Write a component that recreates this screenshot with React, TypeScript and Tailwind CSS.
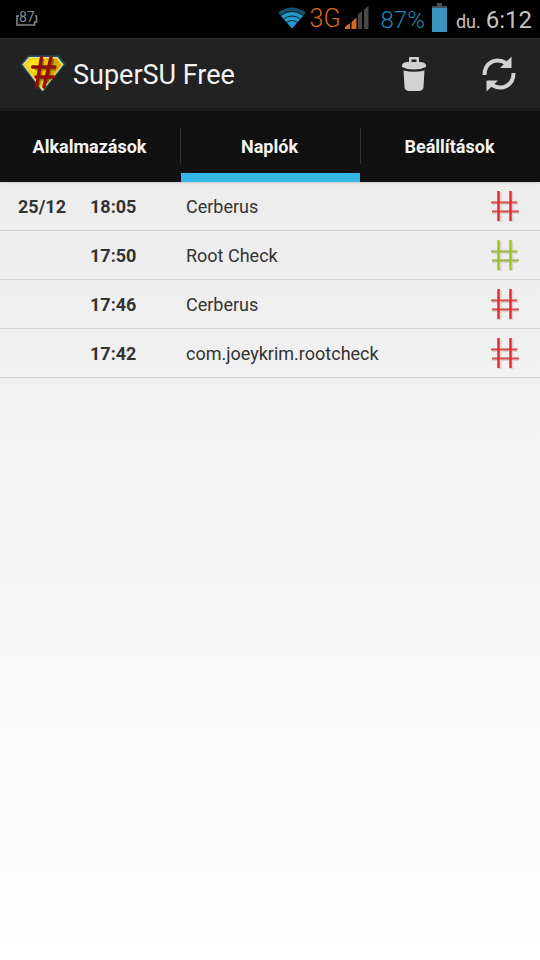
import { useState } from "react";
import clsx from "clsx";

type LogEntry = {
  date?: string;
  time: string;
  app: string;
  granted: boolean;
};

const TABS = ["Alkalmazások", "Naplók", "Beállítások"];

const LOGS: LogEntry[] = [
  { date: "25/12", time: "18:05", app: "Cerberus", granted: false },
  { time: "17:50", app: "Root Check", granted: true },
  { time: "17:46", app: "Cerberus", granted: false },
  { time: "17:42", app: "com.joeykrim.rootcheck", granted: false },
];

function BatteryOutline() {
  return (
    <svg className="h-4 w-6" viewBox="0 0 24 16" fill="none" stroke="#858585" strokeWidth={1.6}>
      <path d="M4 5H2v9h17.500v-3h2V5H20" />
    </svg>
  );
}

function WifiIcon() {
  return (
    <svg className="h-[22px] w-7" viewBox="0 0 28 22">
      <path d="M0 5.500Q14-4.500 28 5.500L14 21.500z" fill="#15506a" />
      <path d="M3 9Q14 1 25 9L14 21.500z" fill="#2598cc" />
      <g fill="none" stroke="#06202c" strokeWidth={1}>
        <path d="M2.500 8.500Q14 .2 25.500 8.500" />
        <path d="M5.500 12Q14 6 22.500 12" />
        <path d="M8.500 15.500Q14 11.500 19.500 15.500" />
      </g>
    </svg>
  );
}

function SignalIcon() {
  return (
    <svg className="h-6 w-6" viewBox="0 0 24 24">
      <path d="M0 24v-2l5-4v6z" fill="#d8691f" />
      <path d="M6.500 24v-7l5-4.500V24z" fill="#d8691f" />
      <path d="M13 24V9.500l4-3.500v18z" fill="#484848" />
      <path d="M19 24V4.500L23.500 1v23z" fill="#484848" />
    </svg>
  );
}

function BatteryIcon() {
  return (
    <svg className="h-[29px] w-[15px]" viewBox="0 0 15 29">
      <path d="M5 0h5v3h5v4H0V3h5z" fill="#4a5054" />
      <path d="M0 5h15v24H0z" fill="#3d94be" />
    </svg>
  );
}

function Logo() {
  return (
    <svg className="h-[38px] w-[46px]" viewBox="0 0 46 38">
      <path d="M8 .5h30.500L45.500 9 22.500 37.500.5 9z" fill="#1f5268" />
      <path d="M9 2h28.500l6 7.500-21 26.500-20-26.500z" fill="#f3e27a" />
      <path d="M10 3.500h26.500l5 6.500-19 23.500L4.500 10z" fill="#efc60a" />
      <path d="M26 3.500h10.500l5 6.500-17 21-1-7 9-13z" fill="#d9ab08" />
      <path d="M6 10l5-5.500h8L17 15l-4 3z" fill="#ffe61c" />
      <path
        d="M23 4L18.500 31M33 4L27 28M15 14h21M17 24h14"
        fill="none"
        stroke="#4a3604"
        strokeOpacity="0.5"
        strokeWidth={3}
      />
      <path
        d="M21.500 2.500L16.500 32M31 2.500L24 32M12.500 12h22.500M16 22h18"
        fill="none"
        stroke="#900f08"
        strokeWidth={3.4}
        strokeLinecap="round"
      />
    </svg>
  );
}

function TrashIcon() {
  return (
    <svg className="h-9 w-[26px]" viewBox="0 0 26 36" fill="#d2d2d2">
      <path fillRule="evenodd" d="M8 6V2q0-1 1-1h8q1 0 1 1v4h-2.500V3.500h-5V6z" />
      <path d="M1 9.500Q1 6.500 6 6h14q5 .5 5 3.500V11q-5 2.500-12 2.500T1 11z" />
      <path d="M2.500 14.500Q13 17 23.500 14.500L22.500 31q-.3 4-5 4h-9q-4.700 0-5-4z" />
    </svg>
  );
}

function RefreshIcon() {
  return (
    <svg className="h-9 w-[34px]" viewBox="0 0 34 36">
      <g fill="none" stroke="#d2d2d2" strokeWidth={4}>
        <path d="M2.500 19C2.500 6.500 14 1 24 7" />
        <path d="M31.500 17C31.500 29.500 20 35 10 29" />
      </g>
      <path d="M29.500.5V12H18zM4.500 35.500V24.500H16z" fill="#d2d2d2" />
    </svg>
  );
}

function HashIcon({ granted }: { granted: boolean }) {
  return (
    <svg
      className="h-8 w-[30px]"
      viewBox="0 0 30 32"
      fill="none"
      role="img"
      aria-label={granted ? "Engedélyezve" : "Megtagadva"}
    >
      <path d="M9.500 2v30M21.500 2v30M2 13h26M2 22h26" stroke="#000" strokeOpacity="0.100" strokeWidth={4} />
      <path d="M1 12.500h26M2 21.500h27" stroke={granted ? "#9cb94a" : "#da5055"} strokeWidth={2} />
      <path d="M8.500 1v30M20.500 1v30" stroke={granted ? "#97cc12" : "#e62a2e"} strokeWidth={2.4} />
    </svg>
  );
}

function StatusBar() {
  return (
    <div className="flex h-[38px] items-start bg-black pr-2 pl-[15px]">
      <div className="relative mt-[11px] h-4 w-6">
        <BatteryOutline />
        <span className="absolute top-0 left-1 text-sm leading-[13px] text-[#8c8c8c]">87</span>
      </div>
      <div className="ml-auto flex items-start leading-8">
        <span className="mt-[7px]"><WifiIcon /></span>
        <span className="mt-[3px] ml-1 text-[25px] leading-8 font-light text-[#d8691f]">3G</span>
        <span className="mt-[5px] ml-1"><SignalIcon /></span>
        <span className="mt-1 ml-3 text-2xl leading-8 font-light text-[#2087b5]">87%</span>
        <span className="mt-[3px] ml-[7px]"><BatteryIcon /></span>
        <span className="mt-1 ml-[9px] flex items-baseline gap-[5px] text-[#c4c4c4]">
          <span className="text-lg">du.</span>
          <span className="text-2xl">6:12</span>
        </span>
      </div>
    </div>
  );
}

export default function App() {
  const [activeTab, setActiveTab] = useState(1);

  return (
    <div className="flex min-h-screen flex-col bg-linear-to-b from-[#e8e8e8] to-white font-['Roboto','Noto_Sans',sans-serif]">
      <StatusBar />

      <header className="flex h-[73px] items-center border-t border-b-3 border-t-[#303030] border-b-[#1b1b1b] bg-[#222222] pr-6 pl-5">
        <Logo />
        <h1 className="mt-0.5 ml-[7px] text-[27px] leading-8 text-[#f3f3f3]">SuperSU Free</h1>
        <div className="ml-auto flex items-center gap-[55px]">
          <button type="button" aria-label="Törlés"><TrashIcon /></button>
          <button type="button" aria-label="Frissítés"><RefreshIcon /></button>
        </div>
      </header>

      <nav className="grid h-[71px] grid-cols-3 bg-[#111111] shadow-sm">
        {TABS.map((tab, i) => (
          <button
            key={tab}
            type="button"
            onClick={() => setActiveTab(i)}
            className="flex flex-col text-lg font-bold text-[#f3f3f3]"
          >
            <span
              className={clsx(
                "mt-[17px] flex h-9 w-full items-center justify-center border-l pt-0.5 pr-0.5",
                i > 0 ? "border-[#333333]" : "border-transparent"
              )}
            >
              {tab}
            </span>
            <span className="mt-auto flex h-[9px] w-full pl-px">
              {i === activeTab && <span className="flex-1 bg-[#33b5e5]" />}
            </span>
          </button>
        ))}
      </nav>

      <table className="w-full table-fixed border-separate border-spacing-0 text-lg text-[#333333]">
        <colgroup>
          <col className="w-[90px]" />
          <col className="w-24" />
          <col />
          <col className="w-[70px]" />
        </colgroup>
        <tbody>
          {LOGS.map((log) => (
            <tr key={log.time} className="h-[49px] *:border-b *:border-[#d2d2d2]">
              <td className="pt-0.5 pl-[18px] font-bold">{log.date}</td>
              <td className="pt-0.5 font-bold">{log.time}</td>
              <td className="truncate pt-0.5">{log.app}</td>
              <td>
                <div className="flex justify-end pr-5">
                  <HashIcon granted={log.granted} />
                </div>
              </td>
            </tr>
          ))}
        </tbody>
      </table>
    </div>
  );
}
